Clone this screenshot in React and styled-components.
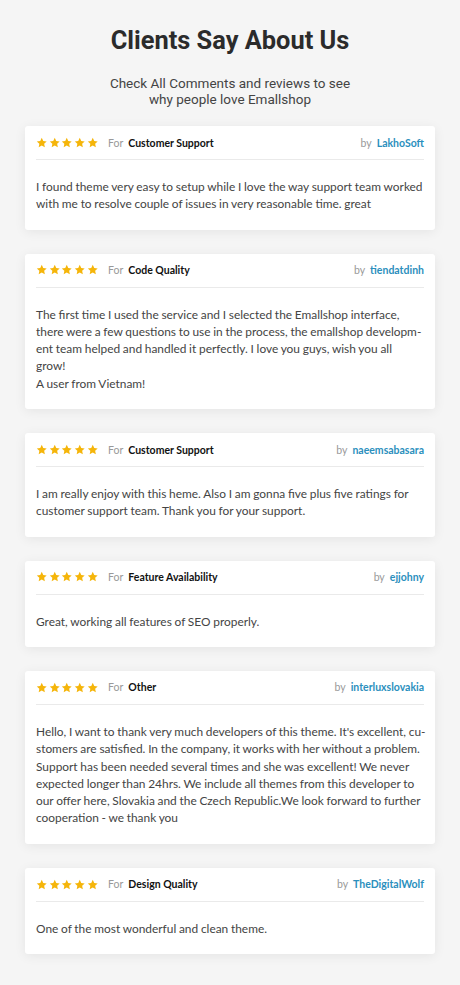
import React from "react";
import styled, { createGlobalStyle } from "styled-components";

const reviews = [
  {
    topic: "Customer Support",
    user: "LakhoSoft",
    text: ["I found theme very easy to setup while I love the way support team worked with me to resolve couple of issues in very reasonable time. great"],
  },
  {
    topic: "Code Quality",
    user: "tiendatdinh",
    text: [
      "The first time I used the service and I selected the Emallshop interface, there were a few questions to use in the process, the emallshop developm\u00ADent team helped and handled it perfectly. I love you guys, wish you all",
      "grow!",
      "A user from Vietnam!",
    ],
  },
  {
    topic: "Customer Support",
    user: "naeemsabasara",
    text: ["I am really enjoy with this heme. Also I am gonna five plus five ratings for customer support team. Thank you for your support."],
  },
  {
    topic: "Feature Availability",
    user: "ejjohny",
    text: ["Great, working all features of SEO properly."],
  },
  {
    topic: "Other",
    user: "interluxslovakia",
    text: [
      "Hello, I want to thank very much developers of this theme. It's excellent, cu\u00ADstomers are satisfied. In the company, it works with her without a problem. Support has been needed several times and she was excellent! We never expected longer than 24hrs. We include all themes from this developer to our offer here, Slovakia and the Czech Republic.We look forward to further cooperation - we thank you",
    ],
  },
  {
    topic: "Design Quality",
    user: "TheDigitalWolf",
    text: ["One of the most wonderful and clean theme."],
  },
];

export default function App() {
  return (
    <Page>
      <GlobalStyle />
      <Title>Clients Say About Us</Title>
      <Subtitle>
        Check All Comments and reviews to see
        <br />
        why people love Emallshop
      </Subtitle>
      <List>
        {reviews.map((r, i) => (
          <Card key={i}>
            <Header>
              <Stars>
                {[0, 1, 2, 3, 4].map((s) => (
                  <Star key={s} viewBox="0 0 24 24">
                    <path d="M12 1.8l3.1 6.6 7.2.9-5.3 5 1.4 7.1L12 17.9l-6.4 3.5 1.4-7.1-5.3-5 7.2-.9z" />
                  </Star>
                ))}
              </Stars>
              <Muted>For</Muted>
              <Topic>{r.topic}</Topic>
              <Spacer />
              <Muted>by</Muted>
              <User>{r.user}</User>
            </Header>
            <Body>
              {r.text.map((t, j) => (
                <p key={j}>{t}</p>
              ))}
            </Body>
          </Card>
        ))}
      </List>
    </Page>
  );
}

const GlobalStyle = createGlobalStyle`
  body {
    margin: 0;
    background: #f5f5f5;
  }
`;

const Page = styled.div`
  padding: 25px 25px 31px;
  font-family: Lato, "Liberation Sans", sans-serif;
`;

const Title = styled.h1`
  margin: 0;
  font-family: Roboto, "Liberation Sans", sans-serif;
  font-size: 25.4px;
  font-weight: 700;
  line-height: 30px;
  color: #2b2b2b;
  text-align: center;
`;

const Subtitle = styled.p`
  margin: 20px 0 19px;
  font-family: Roboto, "Liberation Sans", sans-serif;
  font-size: 13.5px;
  line-height: 16px;
  color: #444;
  text-align: center;
`;

const List = styled.div`
  display: flex;
  flex-direction: column;
  gap: 24px;
`;

const Card = styled.div`
  background: #fff;
  border-radius: 3px;
  box-shadow: 0 2px 12px rgba(0, 0, 0, 0.07);
  padding: 0 11px;
`;

const Header = styled.div`
  display: flex;
  align-items: center;
  height: 33px;
  border-bottom: 1px solid #eaeaea;
  font-size: 10.5px;
`;

const Stars = styled.div`
  display: flex;
  gap: 1.15px;
  margin-right: 10px;
`;

const Star = styled.svg`
  width: 11.5px;
  height: 11.5px;
  fill: #f5b50a;
`;

const Muted = styled.span`
  color: #999;
  margin-right: 5px;
`;

const Topic = styled.span`
  color: #111;
  font-weight: 700;
`;

const Spacer = styled.div`
  flex: 1;
`;

const User = styled.span`
  color: #2b8fbd;
  font-weight: 700;
`;

const Body = styled.div`
  padding: 18px 0 17px;
  margin-right: -3px;
  font-size: 11.9px;
  line-height: 17.3px;
  word-spacing: -0.3px;
  color: #444;

  p {
    margin: 0;
  }
`;
